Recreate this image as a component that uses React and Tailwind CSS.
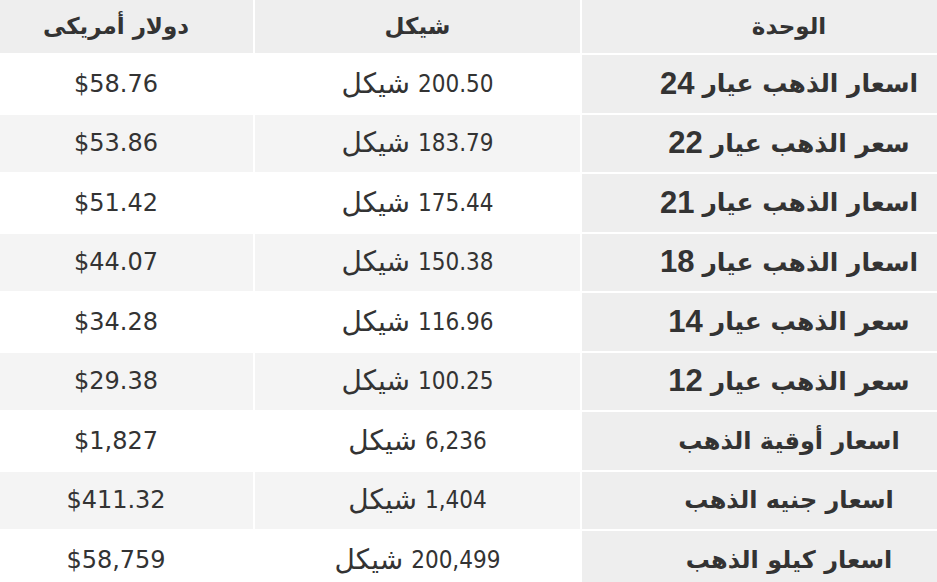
const rows = [
  { unit: "اسعار الذهب عيار", n: "24", ils: "200.50", usd: "$58.76" },
  { unit: "سعر الذهب عيار", n: "22", ils: "183.79", usd: "$53.86" },
  { unit: "اسعار الذهب عيار", n: "21", ils: "175.44", usd: "$51.42" },
  { unit: "اسعار الذهب عيار", n: "18", ils: "150.38", usd: "$44.07" },
  { unit: "سعر الذهب عيار", n: "14", ils: "116.96", usd: "$34.28" },
  { unit: "سعر الذهب عيار", n: "12", ils: "100.25", usd: "$29.38" },
  { unit: "اسعار أوقية الذهب", n: "", ils: "6,236", usd: "$1,827" },
  { unit: "اسعار جنيه الذهب", n: "", ils: "1,404", usd: "$411.32" },
  { unit: "اسعار كيلو الذهب", n: "", ils: "200,499", usd: "$58,759" },
];

export default function App() {
  return (
    <div className="h-[582px] w-[937px] overflow-hidden bg-white text-[#333]">
      <div
        dir="rtl"
        className="grid grid-cols-[355px_325px_253px] gap-[2px] font-['DejaVu_Sans',sans-serif]"
      >
        <div className="h-[53px] bg-[#eeeeee] pl-[59px] flex items-center justify-center text-[23px] font-bold">
          الوحدة
        </div>
        <div className="h-[53px] bg-[#eeeeee] flex items-center justify-center text-[23px] font-bold">
          شيكل
        </div>
        <div className="h-[53px] bg-[#eeeeee] pr-[21px] flex items-center justify-center text-[23px] font-bold">
          دولار أمريكى
        </div>

        {rows.map((r, i) => {
          const alt = i % 2 === 1 ? "bg-[#f4f4f4]" : "bg-white";
          return (
            <div key={i} className="contents">
              <div className="h-[57.5px] bg-[#eeeeee] pl-[59px] flex items-center justify-center font-bold">
                <span className={r.n ? "text-[25px]" : "text-[24px]"}>{r.unit}</span>
                {r.n && (
                  <span className="mr-[8px] text-[31px] font-['Liberation_Sans',sans-serif]">
                    {r.n}
                  </span>
                )}
              </div>
              <div className={`h-[57.5px] ${alt} flex items-center justify-center`}>
                <span className="text-[24px] font-['DejaVu_Sans_Condensed','DejaVu_Sans',sans-serif]">
                  {r.ils}
                </span>
                <span className="mr-[8px] text-[28px]">شيكل</span>
              </div>
              <div className={`h-[57.5px] ${alt} pr-[21px] flex items-center justify-center text-[24px]`}>
                <span dir="ltr">{r.usd}</span>
              </div>
            </div>
          );
        })}
      </div>
    </div>
  );
}
